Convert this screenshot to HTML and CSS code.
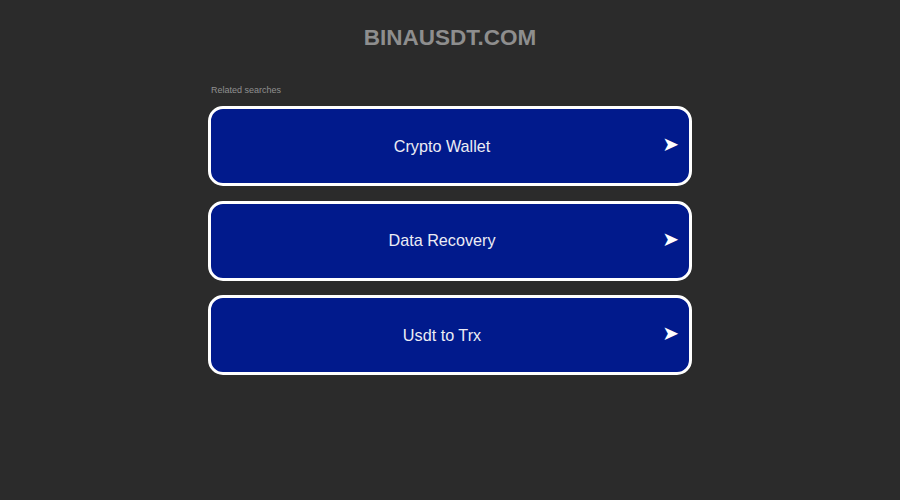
FILE: index.html
```html
<!DOCTYPE html>
<html>
<head>
<meta charset="utf-8">
<link rel="stylesheet" href="styles.css">
</head>
<body>
<div class="page">
  <h1 class="domain">BINAUSDT.COM</h1>
  <div class="related">
    <div class="label">Related searches</div>
    <a class="item" href="#"><span class="text">Crypto Wallet</span><span class="arrow">➤</span></a>
    <a class="item" href="#"><span class="text">Data Recovery</span><span class="arrow">➤</span></a>
    <a class="item" href="#"><span class="text">Usdt to Trx</span><span class="arrow">➤</span></a>
  </div>
</div>
</body>
</html>
```
FILE: styles.css
```css
html, body {
  margin: 0;
  padding: 0;
  background: #2b2b2b;
  font-family: "Liberation Sans", Arial, sans-serif;
}
.page {
  width: 900px;
  height: 500px;
  display: flex;
  flex-direction: column;
  align-items: center;
}
.domain {
  margin: 26px 0 0 0;
  font-size: 22.5px;
  line-height: 24px;
  font-weight: bold;
  color: #8e8e8e;
}
.related {
  width: 484px;
  margin-top: 34px;
  display: flex;
  flex-direction: column;
}
.label {
  font-size: 9px;
  line-height: 12px;
  color: #909090;
  margin-left: 3px;
  margin-bottom: 10px;
}
.item {
  position: relative;
  box-sizing: border-box;
  height: 80px;
  margin-bottom: 14.5px;
  border: 3px solid #ffffff;
  border-radius: 15px;
  background: #011a8c;
  display: flex;
  align-items: center;
  text-decoration: none;
}
.text {
  flex: 1;
  text-align: center;
  padding-right: 16px;
  color: #ececf4;
  font-size: 16.2px;
}
.arrow {
  position: absolute;
  right: 10px;
  top: 50%;
  transform: translateY(-58%);
  color: #ffffff;
  font-family: "DejaVu Sans", sans-serif;
  font-size: 20px;
}
```
